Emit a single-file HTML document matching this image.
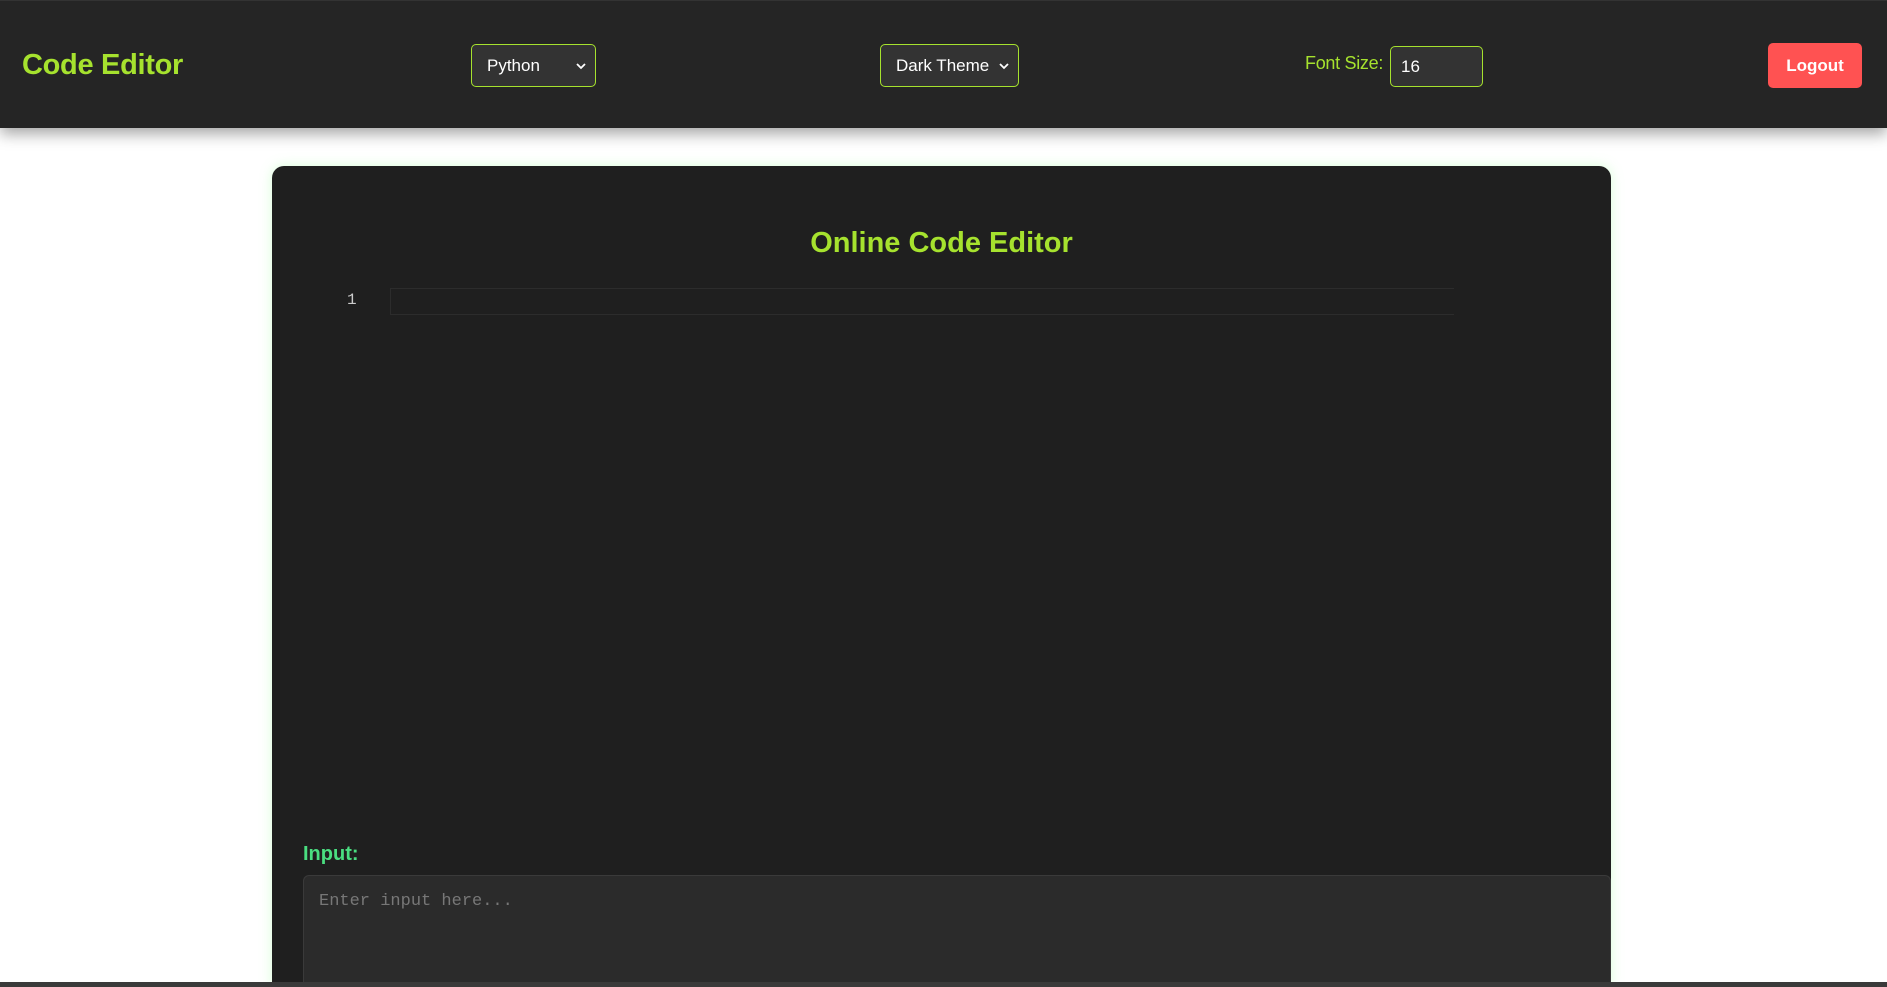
<!DOCTYPE html>
<html><head><meta charset="utf-8"><style>
*{box-sizing:border-box;margin:0;padding:0}
html,body{width:1887px;height:987px;overflow:hidden;background:#fff;font-family:"Liberation Sans",sans-serif}
.wrap{position:relative;width:1887px;height:987px;overflow:hidden}
.hdr{position:absolute;left:0;top:0;width:1887px;height:128px;background:#252525;border-top:1px solid #333;box-shadow:0 6px 14px rgba(0,0,0,.35);z-index:2}
.title{position:absolute;left:22px;top:48px;font-size:29px;font-weight:bold;color:#a6e22e;letter-spacing:-0.3px}
.sel{position:absolute;top:43px;height:43px;border:1px solid #a6e22e;border-radius:5px;background:#333;color:#fff;font-size:17px;line-height:41px;padding-left:15px}
.sel svg{position:absolute;right:8px;top:16px}
.fs{position:absolute;left:1305px;top:52px;font-size:18px;color:#a6e22e;letter-spacing:-0.3px}
.inp{position:absolute;left:1390px;top:45px;width:93px;height:41px;border:1px solid #a6e22e;border-radius:5px;background:#333;color:#fff;font-size:17px;line-height:39px;padding-left:10px}
.logout{position:absolute;left:1768px;top:42px;width:94px;height:45px;background:#ff5252;border-radius:5px;color:#fff;font-weight:bold;font-size:17px;text-align:center;line-height:45px}
.card{position:absolute;left:272px;top:166px;width:1339px;height:821px;background:#1f1f1f;border-radius:12px 12px 0 0;box-shadow:0 0 12px rgba(140,255,140,.35);overflow:hidden}
.h1{position:absolute;left:0;width:100%;top:61px;text-align:center;font-size:29px;font-weight:bold;color:#a6e22e}
.ln{position:absolute;left:75px;top:125px;font-family:"Liberation Mono",monospace;font-size:16px;color:#ccc}
.cl{position:absolute;left:118px;top:122px;width:1064px;height:27px;border:1px solid #2c2c2c;border-right:none}
.il{position:absolute;left:31px;top:677px;font-size:20px;font-weight:bold;color:#4ade80}
.ta{position:absolute;left:31px;top:709px;width:1308px;height:112px;background:#2b2b2b;border:1px solid #3a3a3a;border-bottom:none;border-radius:6px 6px 0 0;padding:16px 15px;font-family:"Liberation Mono",monospace;font-size:17px;color:#777}
.bot{position:absolute;left:0;top:982px;width:1887px;height:5px;background:#3a3a3a;z-index:3}
</style></head><body><div class="wrap">
<div class="hdr">
<div class="title">Code Editor</div>
<div class="sel" style="left:471px;width:125px">Python<svg width="12" height="10" viewBox="0 0 12 10"><path d="M2 3l4 4 4-4" stroke="#fff" stroke-width="1.8" fill="none"/></svg></div>
<div class="sel" style="left:880px;width:139px">Dark Theme<svg width="12" height="10" viewBox="0 0 12 10"><path d="M2 3l4 4 4-4" stroke="#fff" stroke-width="1.8" fill="none"/></svg></div>
<div class="fs">Font Size:</div>
<div class="inp">16</div>
<div class="logout">Logout</div>
</div>
<div class="card">
<div class="h1">Online Code Editor</div>
<div class="ln">1</div>
<div class="cl"></div>
<div class="il">Input:</div>
<div class="ta">Enter input here...</div>
</div>
<div class="bot"></div>
</div></body></html>
